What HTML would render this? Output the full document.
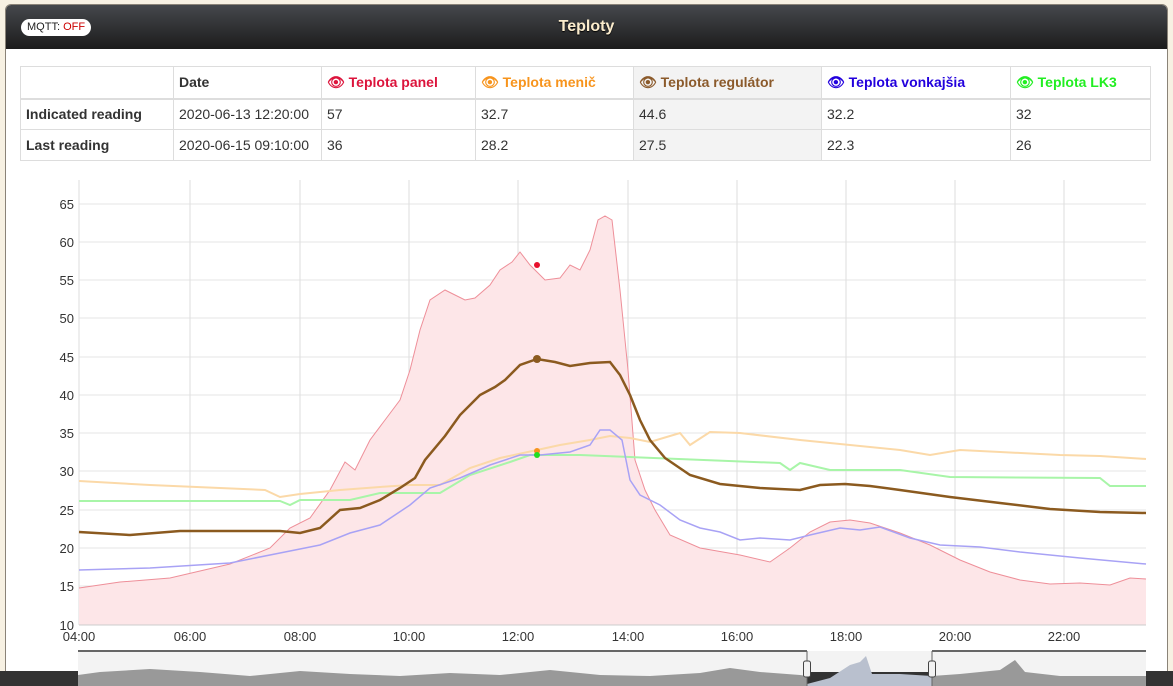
<!DOCTYPE html>
<html style="overflow:hidden;width:1173px;height:686px"><head><meta charset="utf-8"><style>
body{margin:0;width:1173px;height:686px;background:#f7f1e3;overflow:hidden;font-family:"Liberation Sans",sans-serif;position:relative}
.panel{position:absolute;left:5px;top:4px;width:1163px;height:690px;background:#fff;border:1px solid #8a8378;border-radius:6px 6px 0 0;box-sizing:border-box}
.hdr{position:absolute;left:0;top:0;right:0;height:44px;background:linear-gradient(#45484c,#1c1c1c);border-radius:5px 5px 0 0;color:#fbeccc;text-align:center;line-height:44px;font-weight:bold;font-size:16px;text-shadow:0 1px 1px #000}
.mqtt{position:absolute;left:15px;top:14px;height:17px;line-height:17px;padding:0 6px;background:#fff;border-radius:9px;font-size:11px;color:#222;font-weight:normal;text-shadow:none}
table{position:absolute;left:14px;top:61px;border-collapse:collapse;font-size:14px;color:#333}
td{border:1px solid #ddd;height:31px;padding:0 5px;box-sizing:border-box}
tr:first-child td{border-bottom:2px solid #ddd;font-weight:bold}
.g{background:#f3f3f3}
</style></head><body>
<div class="panel">
<div class="hdr"><span class="mqtt">MQTT: <span style="color:#c00">OFF</span></span>Teploty</div>
<table>
<tr style="height:32px"><td style="width:153px"></td><td style="width:148px">Date</td><td style="width:154px;color:#dc143c">&#x1F441; Teplota panel</td><td style="width:158px;color:#f7941d">&#x1F441; Teplota menič</td><td class="g" style="width:188px;color:#8b5a2b">&#x1F441; Teplota regulátor</td><td style="width:189px;color:#2200dd">&#x1F441; Teplota vonkajšia</td><td style="width:140px;color:#22ee22">&#x1F441; Teplota LK3</td></tr>
<tr><td><b>Indicated reading</b></td><td>2020-06-13 12:20:00</td><td>57</td><td>32.7</td><td class="g">44.6</td><td>32.2</td><td>32</td></tr>
<tr><td><b>Last reading</b></td><td>2020-06-15 09:10:00</td><td>36</td><td>28.2</td><td class="g">27.5</td><td>22.3</td><td>26</td></tr>
</table>
</div>
<svg style="position:absolute;left:0;top:0" width="1173" height="686" font-family="Liberation Sans" font-size="13" fill="#333">
<g stroke="#e6e6e6"><line x1="79" x2="1146" y1="204" y2="204"/><line x1="79" x2="1146" y1="242" y2="242"/><line x1="79" x2="1146" y1="280" y2="280"/><line x1="79" x2="1146" y1="318" y2="318"/><line x1="79" x2="1146" y1="357" y2="357"/><line x1="79" x2="1146" y1="395" y2="395"/><line x1="79" x2="1146" y1="433" y2="433"/><line x1="79" x2="1146" y1="471" y2="471"/><line x1="79" x2="1146" y1="510" y2="510"/><line x1="79" x2="1146" y1="548" y2="548"/><line x1="79" x2="1146" y1="586" y2="586"/></g>
<g stroke="#ddd"><line x1="79" x2="79" y1="180" y2="625"/><line x1="190" x2="190" y1="180" y2="625"/><line x1="300" x2="300" y1="180" y2="625"/><line x1="409" x2="409" y1="180" y2="625"/><line x1="518" x2="518" y1="180" y2="625"/><line x1="628" x2="628" y1="180" y2="625"/><line x1="737" x2="737" y1="180" y2="625"/><line x1="846" x2="846" y1="180" y2="625"/><line x1="955" x2="955" y1="180" y2="625"/><line x1="1064" x2="1064" y1="180" y2="625"/></g>
<polygon fill="#fde6e8" points="79,625 79,588 120,582 170,578 230,564 270,548 290,528 310,518 330,490 345,462 355,470 370,440 385,420 400,400 410,370 420,330 430,300 445,290 455,295 465,300 475,298 490,285 500,270 512,262 520,252 530,265 545,280 560,278 570,265 580,270 590,250 598,220 605,216 612,220 620,290 628,370 635,460 645,490 655,510 670,535 700,548 740,555 770,562 790,548 810,532 830,522 850,520 870,523 900,533 930,545 960,560 990,572 1020,580 1050,584 1080,583 1110,585 1130,578 1146,579 1146,625"/>
<polyline fill="none" stroke="#ee8f99" stroke-width="1" points="79,588 120,582 170,578 230,564 270,548 290,528 310,518 330,490 345,462 355,470 370,440 385,420 400,400 410,370 420,330 430,300 445,290 455,295 465,300 475,298 490,285 500,270 512,262 520,252 530,265 545,280 560,278 570,265 580,270 590,250 598,220 605,216 612,220 620,290 628,370 635,460 645,490 655,510 670,535 700,548 740,555 770,562 790,548 810,532 830,522 850,520 870,523 900,533 930,545 960,560 990,572 1020,580 1050,584 1080,583 1110,585 1130,578 1146,579"/>
<polyline fill="none" stroke="#fbd9a8" stroke-width="2" points="79,481 150,485 220,488 265,490 280,497 300,494 340,490 380,487 410,485 440,485 470,468 500,458 537,450 560,445 590,440 610,436 630,438 650,442 670,436 680,433 690,445 710,432 740,433 800,440 900,450 930,455 960,450 1000,452 1060,455 1100,456 1146,459"/>
<polyline fill="none" stroke="#a8f5a8" stroke-width="2" points="79,501 280,501 290,505 300,500 350,500 380,493 440,493 470,475 510,462 530,455 580,455 780,463 790,470 800,463 830,470 900,470 950,477 1100,478 1110,486 1146,486"/>
<polyline fill="none" stroke="#a8a2f5" stroke-width="1.5" points="79,570 150,568 230,563 280,553 320,545 350,533 380,525 410,505 430,488 460,478 490,465 520,455 540,455 570,452 590,445 600,430 610,430 622,440 630,480 640,495 660,505 680,520 700,528 720,532 740,540 760,538 790,540 810,535 840,528 860,530 880,527 910,538 940,545 980,547 1020,552 1080,558 1146,564"/>
<polyline fill="none" stroke="#8b5a1f" stroke-width="2.5" points="79,532 130,535 180,531 280,531 300,533 320,528 340,510 360,508 380,500 400,488 415,478 425,460 445,436 460,415 480,395 495,387 505,380 520,365 537,359 555,362 570,366 590,363 610,362 620,375 630,395 640,420 650,440 665,458 690,475 720,484 760,488 800,490 820,485 845,484 870,486 900,490 950,497 1000,503 1050,509 1100,512 1146,513"/>
<circle cx="537" cy="265" r="3" fill="#e8112d"/><circle cx="537" cy="359" r="4" fill="#8b5a1f"/><circle cx="537" cy="451" r="3" fill="#f7941d"/><circle cx="537" cy="455" r="3" fill="#22dd22"/>
<line x1="79" x2="1146" y1="625" y2="625" stroke="#ccc"/>
<g text-anchor="end"><text x="74" y="209">65</text><text x="74" y="247">60</text><text x="74" y="285">55</text><text x="74" y="323">50</text><text x="74" y="362">45</text><text x="74" y="400">40</text><text x="74" y="438">35</text><text x="74" y="476">30</text><text x="74" y="515">25</text><text x="74" y="553">20</text><text x="74" y="591">15</text><text x="74" y="630">10</text></g>
<g text-anchor="middle"><text x="79" y="641">04:00</text><text x="190" y="641">06:00</text><text x="300" y="641">08:00</text><text x="409" y="641">10:00</text><text x="518" y="641">12:00</text><text x="628" y="641">14:00</text><text x="737" y="641">16:00</text><text x="846" y="641">18:00</text><text x="955" y="641">20:00</text><text x="1064" y="641">22:00</text></g>
<rect x="0" y="671" width="1173" height="15" fill="#333"/>
<rect x="78" y="651" width="1068" height="35" fill="#f3f3f3"/>
<path d="M78,686 L78,675 100,672 150,669 200,672 250,676 300,671 350,674 400,676 450,673 500,675 550,670 600,675 650,676 700,673 730,668 760,672 800,675 807,676 807,686Z" fill="#999"/>
<path d="M807,672 H932 V686 H807Z" fill="#333"/>
<path d="M807,686 L807,684 830,678 850,665 860,662 866,656 872,674 900,674 932,676 932,686Z" fill="#b9c0ce"/>
<path d="M932,686 L932,676 960,674 1000,670 1015,660 1025,672 1060,676 1146,676 1146,686Z" fill="#999"/>
<path d="M78,651 H807 M932,651 H1146" stroke="#666" stroke-width="2"/>
<line x1="807" x2="807" y1="651" y2="686" stroke="#666"/><line x1="932" x2="932" y1="651" y2="686" stroke="#666"/>
<rect x="803.5" y="661" width="7" height="16" rx="2" fill="#f2f2f2" stroke="#444"/><rect x="928.5" y="661" width="7" height="16" rx="2" fill="#f2f2f2" stroke="#444"/>
</svg>
</body></html>
